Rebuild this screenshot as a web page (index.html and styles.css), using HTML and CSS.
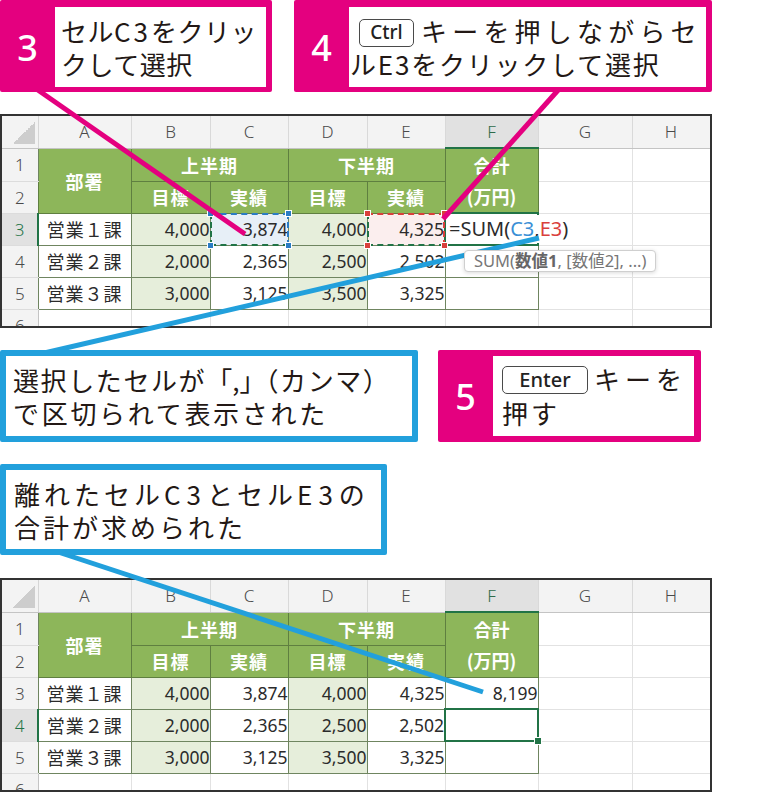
FILE: index.html
```html
<!DOCTYPE html>
<html lang="ja">
<head>
<meta charset="utf-8">
<title>SUM</title>
<link rel="stylesheet" href="styles.css">
</head>
<body>
<div class="page">

  <div class="row row-top">
    <div class="callout pink c3">
      <div class="num">3</div>
      <div class="body b3">
        <div class="ln l3a">セル<span class="lat3">C3</span>をクリッ</div>
        <div class="ln l3b">クして選択</div>
      </div>
    </div>
    <div class="callout pink c4">
      <div class="num">4</div>
      <div class="body b4">
        <div class="ln l4a"><span class="key kctrl">Ctrl</span>キーを押しながらセ</div>
        <div class="ln l4b">ルE3をクリックして選択</div>
      </div>
    </div>
  </div>

  <div class="sheet s1">
    <table class="grid">
      <colgroup>
        <col class="w-rh"><col class="w-a"><col class="w-b"><col class="w-c"><col class="w-d"><col class="w-e"><col class="w-f"><col class="w-g"><col class="w-h">
      </colgroup>
      <tr class="r-hd">
        <th class="corner"><span class="tri"></span></th>
        <th class="ch">A</th><th class="ch">B</th><th class="ch">C</th><th class="ch">D</th><th class="ch">E</th><th class="ch ch-act">F</th><th class="ch">G</th><th class="ch">H</th>
      </tr>
      <tr class="r1">
        <th class="rh in">1</th>
        <td class="g" rowspan="2">部署</td>
        <td class="g" colspan="2">上半期</td>
        <td class="g" colspan="2">下半期</td>
        <td class="g two" rowspan="2">合計<br>(万円)</td>
        <td class="e"></td><td class="e"></td>
      </tr>
      <tr class="r2">
        <th class="rh in">2</th>
        <td class="g">目標</td><td class="g">実績</td><td class="g">目標</td><td class="g">実績</td>
        <td class="e"></td><td class="e"></td>
      </tr>
      <tr class="r3">
        <th class="rh in rh-act">3</th>
        <td class="dw name">営業１課</td>
        <td class="dg num-c">4,000</td>
        <td class="dw num-c ref refb">3,874<span class="sq sb tl"></span><span class="sq sb tr"></span><span class="sq sb bl"></span><span class="sq sb br"></span></td>
        <td class="dg num-c">4,000</td>
        <td class="dw num-c ref refr">4,325<span class="sq sr tl"></span><span class="sq sr tr"></span><span class="sq sr bl"></span><span class="sq sr br"></span></td>
        <td class="dw act"><span class="fx">=SUM(<span class="fb">C3</span>,<span class="fr">E3</span>)</span><span class="tip">SUM(<b>数値1</b>, [数値2], ...)</span></td>
        <td class="e"></td><td class="e"></td>
      </tr>
      <tr class="r4">
        <th class="rh in">4</th>
        <td class="dw name">営業２課</td>
        <td class="dg num-c">2,000</td>
        <td class="dw num-c">2,365</td>
        <td class="dg num-c">2,500</td>
        <td class="dw num-c">2,502</td>
        <td class="dw"></td>
        <td class="e"></td><td class="e"></td>
      </tr>
      <tr class="r5">
        <th class="rh in">5</th>
        <td class="dw name">営業３課</td>
        <td class="dg num-c">3,000</td>
        <td class="dw num-c">3,125</td>
        <td class="dg num-c">3,500</td>
        <td class="dw num-c">3,325</td>
        <td class="dw"></td>
        <td class="e"></td><td class="e"></td>
      </tr>
      <tr class="r6">
        <th class="rh">6</th>
        <td class="e"></td><td class="e"></td><td class="e"></td><td class="e"></td><td class="e"></td><td class="e"></td><td class="e"></td><td class="e"></td>
      </tr>
    </table>
  </div>

  <div class="row row-mid">
    <div class="callout blue cm">
      <div class="body bm">
        <div class="ln lma">選択したセルが<span class="brk">「,」</span>（カンマ）</div>
        <div class="ln lmb">で区切られて表示された</div>
      </div>
    </div>
    <div class="callout pink c5">
      <div class="num">5</div>
      <div class="body b5">
        <div class="ln l5a"><span class="key kenter">Enter</span>キーを</div>
        <div class="ln l5b">押す</div>
      </div>
    </div>
  </div>

  <div class="row row-low">
    <div class="callout blue cl">
      <div class="body bl2">
        <div class="ln lla">離れたセル<span class="latl">C3</span>とセル<span class="latl">E3</span>の</div>
        <div class="ln llb">合計が求められた</div>
      </div>
    </div>
  </div>

  <div class="sheet s2">
    <table class="grid">
      <colgroup>
        <col class="w-rh"><col class="w-a"><col class="w-b"><col class="w-c"><col class="w-d"><col class="w-e"><col class="w-f"><col class="w-g"><col class="w-h">
      </colgroup>
      <tr class="r-hd">
        <th class="corner"><span class="tri"></span></th>
        <th class="ch">A</th><th class="ch">B</th><th class="ch">C</th><th class="ch">D</th><th class="ch">E</th><th class="ch ch-act">F</th><th class="ch">G</th><th class="ch">H</th>
      </tr>
      <tr class="r1">
        <th class="rh in">1</th>
        <td class="g" rowspan="2">部署</td>
        <td class="g" colspan="2">上半期</td>
        <td class="g" colspan="2">下半期</td>
        <td class="g two" rowspan="2">合計<br>(万円)</td>
        <td class="e"></td><td class="e"></td>
      </tr>
      <tr class="r2">
        <th class="rh in">2</th>
        <td class="g">目標</td><td class="g">実績</td><td class="g">目標</td><td class="g">実績</td>
        <td class="e"></td><td class="e"></td>
      </tr>
      <tr class="r3">
        <th class="rh in">3</th>
        <td class="dw name">営業１課</td>
        <td class="dg num-c">4,000</td>
        <td class="dw num-c">3,874</td>
        <td class="dg num-c">4,000</td>
        <td class="dw num-c">4,325</td>
        <td class="dw num-c">8,199</td>
        <td class="e"></td><td class="e"></td>
      </tr>
      <tr class="r4">
        <th class="rh in rh-act">4</th>
        <td class="dw name">営業２課</td>
        <td class="dg num-c">2,000</td>
        <td class="dw num-c">2,365</td>
        <td class="dg num-c">2,500</td>
        <td class="dw num-c">2,502</td>
        <td class="dw act act-fill"><span class="handle"></span></td>
        <td class="e"></td><td class="e"></td>
      </tr>
      <tr class="r5">
        <th class="rh in">5</th>
        <td class="dw name">営業３課</td>
        <td class="dg num-c">3,000</td>
        <td class="dw num-c">3,125</td>
        <td class="dg num-c">3,500</td>
        <td class="dw num-c">3,325</td>
        <td class="dw"></td>
        <td class="e"></td><td class="e"></td>
      </tr>
      <tr class="r6">
        <th class="rh">6</th>
        <td class="e"></td><td class="e"></td><td class="e"></td><td class="e"></td><td class="e"></td><td class="e"></td><td class="e"></td><td class="e"></td>
      </tr>
    </table>
  </div>

  <svg class="leaders" width="783" height="793" viewBox="0 0 783 793">
    <line x1="35" y1="88" x2="245" y2="234" stroke="#e4007f" stroke-width="5"/>
    <line x1="560" y1="88" x2="443" y2="219" stroke="#e4007f" stroke-width="5"/>
    <line x1="539" y1="238" x2="40" y2="354" stroke="#22a0dc" stroke-width="5"/>
    <line x1="58" y1="552" x2="483" y2="692" stroke="#22a0dc" stroke-width="5"/>
  </svg>
</div>
</body>
</html>
```

FILE: styles.css
```css
* { box-sizing: border-box; }
html, body { margin: 0; padding: 0; background: #fff; }
body {
  font-family: "Noto Sans CJK JP", "Noto Sans", sans-serif;
  color: #231815;
}
.page { position: relative; width: 783px; height: 793px; overflow: hidden; }

/* ---------- callouts ---------- */
.row { display: flex; align-items: flex-start; }
.row-top { height: 92px; }
.row-mid { margin-top: 22px; height: 92px; }
.row-low { margin-top: 22px; height: 91px; }

.callout { position: relative; z-index: 2; display: flex; border-radius: 2px; }
.pink { background: #e4007f; padding: 7px 6px 5px 0; }
.blue { border: 6px solid #22a0dc; background: #fff; }
.num {
  width: 55px; flex: none; color: #fff;
  font-family: "Noto Sans", sans-serif; font-weight: 500; font-size: 36px;
  display: flex; align-items: center; justify-content: center;
}
.body {
  flex: 1; background: #fff;
  display: flex; flex-direction: column; justify-content: center;
  font-size: 26px; line-height: 33px; white-space: nowrap;
}
.ln { display: block; }

.c3 { width: 272px; height: 92px; margin-right: 22px; }
.c4 { width: 418px; height: 92px; }
.b3 { padding-left: 6px; letter-spacing: 0.5px; }
.lat3 { letter-spacing: 3px; }
.b4 { padding-left: 1px; }
.l4a { letter-spacing: 5.2px; }
.l4b { letter-spacing: 1.8px; }

.key {
  display: inline-block; height: 28px; line-height: 25px;
  border: 1.5px solid #4a4a4a; border-radius: 5px; background: #fff;
  font-family: "Noto Sans", sans-serif; font-weight: 500; font-size: 19px;
  letter-spacing: 0; text-align: center; vertical-align: 3px; color: #222;
}
.kctrl { width: 55px; margin-left: 9px; margin-right: 7px; }
.kenter { width: 86px; margin-right: 6px; font-size: 20px; }

.cm { width: 418px; height: 92px; }
.bm { padding-left: 7px; }
.lma { letter-spacing: 1.6px; }
.lmb { letter-spacing: 2.7px; }
.brk { letter-spacing: 0; }
.c5 { width: 263px; height: 92px; margin-left: 20px; padding: 6px 7px 6px 0; }
.b5 { padding-left: 9px; line-height: 34px; }
.l5a { letter-spacing: 5px; }
.l5b { letter-spacing: 3px; }

.cl { width: 387px; height: 91px; }
.bl2 { padding-left: 8px; }
.lla { letter-spacing: 4px; }
.llb { letter-spacing: 3px; }
.latl { letter-spacing: 6px; }

/* ---------- sheets ---------- */
.sheet {
  position: relative; margin-top: 22px;
  width: 712px; height: 214px; border: 2px solid #333;
  overflow: hidden; background: #fff;
}
.s2 { margin-top: 23px; }
.grid { border-collapse: collapse; table-layout: fixed; width: 708px; }
.grid th, .grid td { padding: 0; white-space: nowrap; overflow: visible; }
.w-rh { width: 36px; } .w-a { width: 93px; } .w-b { width: 79px; } .w-c { width: 78px; }
.w-d { width: 79px; } .w-e { width: 78px; } .w-f { width: 93px; } .w-g { width: 94px; } .w-h { width: 78px; }

.r-hd { height: 32px; }
.r1 { height: 33px; }
.r2, .r3, .r4, .r5, .r6 { height: 32px; }

.corner { background: #f3f3f3; border-right: 1px solid #d6d6d6; border-bottom: 1px solid #c4c4c4; position: relative; }
.tri {
  position: absolute; right: 3px; bottom: 4px; width: 22px; height: 22px;
  background: linear-gradient(to bottom right, transparent 50%, #cdcdcd 50%);
}
.ch {
  background: #f3f3f3; color: #4a4a4a; font-family: "Noto Sans", sans-serif;
  font-weight: 300; font-size: 17px; text-align: center;
  border-right: 1px solid #d9d9d9; border-bottom: 1px solid #c4c4c4;
}
.ch-act { background: #e1e1e1; border-bottom: 2px solid #217346; color: #2f6b4a; }
.rh {
  background: #f3f3f3; color: #4a4a4a; font-family: "Noto Sans", sans-serif;
  font-weight: 300; font-size: 17px; text-align: center;
  border-bottom: 1px solid #dcdcdc; border-right: 1px solid #c4c4c4;
}
.rh.in { border-right-color: #6f8560; }
.rh-act { background: #e1e1e1; color: #217346; border-right: 2px solid #217346 !important; }

.g {
  background: #8db65a; color: #fff; font-weight: 700; font-size: 18px;
  text-align: center; border: 1px solid #5f7f40; letter-spacing: 1px;
}
.two { line-height: 31px; letter-spacing: 0; }
.dw, .dg { border: 1px solid #6f8560; color: #2b2b2b; font-size: 17.5px; }
.dw { background: #fff; }
.dg { background: #e6eedb; }
.name { text-align: center; font-size: 18px; letter-spacing: 1px; }
.num-c { text-align: right; padding-right: 4px; font-family: "Noto Sans", sans-serif; }
.e { border: 1px solid #e2e2e2; }

.ref { position: relative; }
.ref::after {
  content: ""; position: absolute; left: -1px; top: -1px; right: -1px; bottom: -1px;
  border: 2px dashed; pointer-events: none;
}
.refb { background: #e7eff7; }
.refb::after { border-color: #2b7cc4 #2b7cc4 #217346 #217346; }
.refr { background: #fbeeee; }
.refr::after { border-color: #d9403c #d9403c #217346 #217346; }
.sq { position: absolute; width: 7px; height: 7px; border: 1px solid #fff; z-index: 1; }
.sb { background: #2b7cc4; }
.sr { background: #d9403c; }
.tl { left: -4px; top: -4px; } .tr { right: -4px; top: -4px; }
.bl { left: -4px; bottom: -4px; } .br { right: -4px; bottom: -4px; }

.act { border: 2px solid #217346; position: relative; }
.fx {
  position: absolute; left: 1px; top: 1px; bottom: 1px;
  padding: 0 6px 0 2px; background: #fff;
  font-family: "Noto Sans", sans-serif; font-size: 20px; line-height: 28px; color: #2b2b2b;
}
.fb { color: #3a8fd6; }
.fr { color: #d9403c; }
.tip {
  position: absolute; left: 18px; top: 36px; height: 22px;
  padding: 0 9px; border: 1px solid #cfcfcf; border-radius: 4px; background: #fff;
  box-shadow: 0 1px 4px rgba(0,0,0,0.15);
  font-family: "Noto Sans", "Noto Sans CJK JP", sans-serif; font-size: 16.5px; line-height: 19px; color: #777;
  z-index: 2;
}
.tip b { font-weight: 700; color: #666; }
.handle {
  position: absolute; right: -5px; bottom: -5px; width: 8px; height: 8px;
  background: #217346; border: 1px solid #fff;
}

.leaders { position: absolute; left: 0; top: 0; z-index: 1; pointer-events: none; }
```
